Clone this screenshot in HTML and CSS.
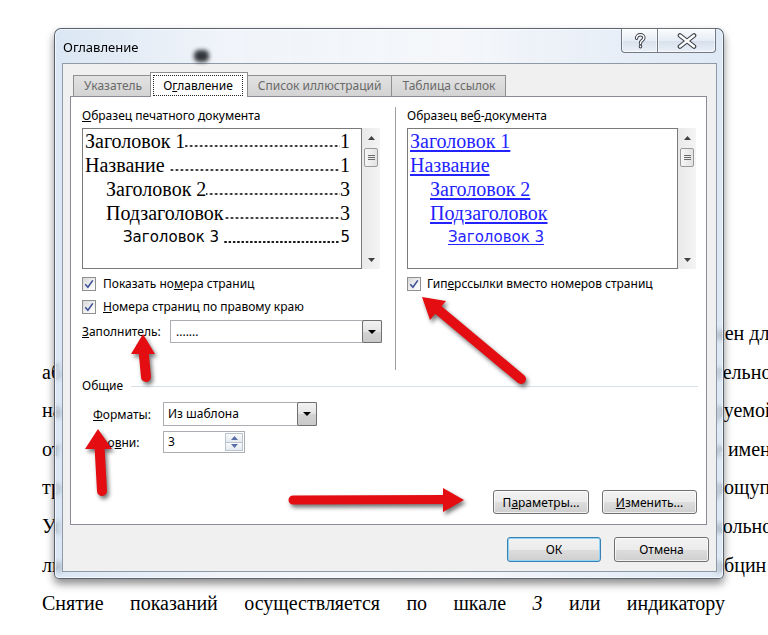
FILE: index.html
```html
<!DOCTYPE html>
<html lang="ru">
<head>
<meta charset="utf-8">
<title>Оглавление</title>
<link rel="stylesheet" href="styles.css">
</head>
<body>
<div class="page">
  <div class="doc">
    <div class="doc-head"></div>
    <div class="row"><span class="l"></span><span class="r">нен для</span></div>
    <div class="row"><span class="l">аб</span><span class="r">тельно</span></div>
    <div class="row"><span class="l">на</span><span class="r">руемой</span></div>
    <div class="row"><span class="l">от</span><span class="r">е имени</span></div>
    <div class="row"><span class="l">тр</span><span class="r">рощупь</span></div>
    <div class="row"><span class="l">Ус</span><span class="r">кольно</span></div>
    <div class="row"><span class="l">ли</span><span class="r">обцин</span></div>
    <div class="full">Снятие показаний осуществляется по шкале <i>3</i> или индикатору</div>
    <div class="last"><span>5. Место установки</span><span>НМ</span></div>
  </div>

  <div class="dialog">
    <div class="titlebar">
      <span class="title">Оглавление</span>
      <span class="smudge"></span>
      <div class="caps">
        <span class="cap help"><svg width="12" height="16" viewBox="0 0 12 16"><path d="M2.6 5.2C2.6 3 4.2 1.8 6.3 1.8C8.6 1.8 9.9 3.1 9.9 4.8C9.9 6.6 8.4 7.2 7.4 8C6.7 8.6 6.5 9.1 6.5 10.4M6.5 13.2L6.5 13.8" fill="none" stroke="#3a3f47" stroke-width="3.4" stroke-linecap="round" stroke-linejoin="round"/><path d="M2.6 5.2C2.6 3 4.2 1.8 6.3 1.8C8.6 1.8 9.9 3.1 9.9 4.8C9.9 6.6 8.4 7.2 7.4 8C6.7 8.6 6.5 9.1 6.5 10.4M6.5 13.2L6.5 13.8" fill="none" stroke="#fff" stroke-width="1.5" stroke-linecap="round" stroke-linejoin="round"/></svg></span>
        <span class="cap close"><svg width="22" height="16" viewBox="0 0 22 16"><path d="M4 2.5L18 13.5M18 2.5L4 13.5" fill="none" stroke="#3a3f47" stroke-width="4.6" stroke-linecap="round"/><path d="M4 2.5L18 13.5M18 2.5L4 13.5" fill="none" stroke="#fff" stroke-width="2.4" stroke-linecap="round"/></svg></span>
      </div>
    </div>

    <div class="client">
      <div class="tabs">
        <span class="tab">Указатель</span>
        <span class="tab active"><span class="focus">О<u>г</u>лавление</span></span>
        <span class="tab">Список иллюстраций</span>
        <span class="tab">Таблица ссылок</span>
      </div>

      <div class="panel">
        <div class="samples">
          <div class="col left">
            <div class="label"><u>О</u>бразец печатного документа</div>
            <div class="preview">
              <div class="pbox">
                <div class="toc h1"><span class="n">Заголовок 1</span><span class="dots"></span><span class="pg">1</span></div>
                <div class="toc h1"><span class="n sp">Название</span><span class="dots"></span><span class="pg">1</span></div>
                <div class="toc h2"><span class="n">Заголовок 2</span><span class="dots"></span><span class="pg">3</span></div>
                <div class="toc h2"><span class="n">Подзаголовок</span><span class="dots"></span><span class="pg">3</span></div>
                <div class="toc h3"><span class="n sp">Заголовок 3</span><span class="dots"></span><span class="pg">5</span></div>
              </div>
              <div class="vscroll">
                <span class="sa"><svg width="7" height="4" viewBox="0 0 7 4"><path d="M3.5 0L7 4H0Z" fill="#404040"/></svg></span>
                <span class="thumb"><svg width="7" height="5" viewBox="0 0 7 5"><path d="M0 0.5H7M0 2.5H7M0 4.5H7" stroke="#6b6b6b" stroke-width="1"/></svg></span>
                <span class="sfill"></span>
                <span class="sa"><svg width="7" height="4" viewBox="0 0 7 4"><path d="M0 0H7L3.5 4Z" fill="#404040"/></svg></span>
              </div>
            </div>
            <div class="check"><span class="cb"><svg width="12" height="12" viewBox="0 0 12 12"><path d="M2.3 6.3L4.9 9.2L9.8 2.4" fill="none" stroke="#3c4f98" stroke-width="1.6"/></svg></span>Показать но<u>м</u>ера страниц</div>
            <div class="check"><span class="cb"><svg width="12" height="12" viewBox="0 0 12 12"><path d="M2.3 6.3L4.9 9.2L9.8 2.4" fill="none" stroke="#3c4f98" stroke-width="1.6"/></svg></span><u>Н</u>омера страниц по правому краю</div>
            <div class="field">
              <span class="flabel"><u>З</u>аполнитель:</span>
              <div class="combo leader"><span class="val">.......</span><span class="drop"><svg width="8" height="4" viewBox="0 0 8 4"><path d="M0 0H8L4 4Z" fill="#000"/></svg></span></div>
            </div>
          </div>

          <div class="vsep"></div>

          <div class="col right">
            <div class="label">Образец ве<u>б</u>-документа</div>
            <div class="preview">
              <div class="pbox web">
                <div class="toc h1"><span class="lnk">Заголовок 1</span></div>
                <div class="toc h1"><span class="lnk">Название</span></div>
                <div class="toc h2"><span class="lnk">Заголовок 2</span></div>
                <div class="toc h2"><span class="lnk">Подзаголовок</span></div>
                <div class="toc h3"><span class="lnk">Заголовок 3</span></div>
              </div>
              <div class="vscroll">
                <span class="sa"><svg width="7" height="4" viewBox="0 0 7 4"><path d="M3.5 0L7 4H0Z" fill="#404040"/></svg></span>
                <span class="thumb"><svg width="7" height="5" viewBox="0 0 7 5"><path d="M0 0.5H7M0 2.5H7M0 4.5H7" stroke="#6b6b6b" stroke-width="1"/></svg></span>
                <span class="sfill"></span>
                <span class="sa"><svg width="7" height="4" viewBox="0 0 7 4"><path d="M0 0H7L3.5 4Z" fill="#404040"/></svg></span>
              </div>
            </div>
            <div class="check"><span class="cb"><svg width="12" height="12" viewBox="0 0 12 12"><path d="M2.3 6.3L4.9 9.2L9.8 2.4" fill="none" stroke="#3c4f98" stroke-width="1.6"/></svg></span>Гип<u>е</u>рссылки вместо номеров страниц</div>
          </div>
        </div>

        <div class="group"><span>Общие</span><span class="hline"></span></div>
        <div class="grow">
          <span class="glabel"><u>Ф</u>орматы:</span>
          <div class="combo formats"><span class="val">Из шаблона</span><span class="drop"><svg width="8" height="4" viewBox="0 0 8 4"><path d="M0 0H8L4 4Z" fill="#000"/></svg></span></div>
        </div>
        <div class="grow lv">
          <span class="glabel">Уро<u>в</u>ни:</span>
          <div class="spin"><span class="val">3</span><span class="spbtns"><span class="sb"><svg width="7" height="4" viewBox="0 0 7 4"><path d="M3.5 0L7 4H0Z" fill="#5a6ea8"/></svg></span><span class="sb"><svg width="7" height="4" viewBox="0 0 7 4"><path d="M0 0H7L3.5 4Z" fill="#5a6ea8"/></svg></span></span></div>
        </div>
        <div class="panel-btns">
          <span class="btn">П<u>а</u>раметры...</span>
          <span class="btn"><u>И</u>зменить...</span>
        </div>
      </div>

      <div class="dlg-btns">
        <span class="btn ok">ОК</span>
        <span class="btn">Отмена</span>
      </div>
    </div>
  </div>

  <svg class="arrows" width="768" height="635" viewBox="0 0 768 635">
    <g fill="#e30d12" stroke="#e30d12" stroke-linecap="round">
      <path d="M146 377L143.5 350" stroke-width="10" fill="none"/>
      <path d="M143 334L155 354L131 354Z" stroke="none"/>
      <path d="M521 379L436 308" stroke-width="10" fill="none"/>
      <path d="M422 297L446 301L430 320Z" stroke="none"/>
      <path d="M102 491L99.5 446" stroke-width="10" fill="none"/>
      <path d="M98 429L112 449L85 449Z" stroke="none"/>
      <path d="M293 500L446 499.5" stroke-width="9" fill="none"/>
      <path d="M464 500L443 488L443 512Z" stroke="none"/>
    </g>
  </svg>
</div>
</body>
</html>
```

FILE: styles.css
```css
* { box-sizing: border-box; }
html, body { margin: 0; padding: 0; background: #fff; }
body { width: 768px; height: 635px; overflow: hidden; }
.page { position: relative; width: 768px; height: 635px; overflow: hidden; background: #fff; color: #000; }

/* document behind the dialog */
.doc { font-family: "Liberation Serif", "Times New Roman", serif; font-size: 20px; line-height: 38.6px; }
.doc-head { height: 314px; }
.row { display: grid; grid-template-columns: 672px max-content; height: 38.6px; padding-left: 42px; white-space: nowrap; }
.full { height: 38.6px; width: 725px; padding-left: 42px; text-align: justify; text-align-last: justify; }
.last { display: flex; justify-content: space-between; width: 713px; padding-left: 332px; height: 38.6px; }

/* dialog window */
.dialog {
  position: absolute; left: 54px; top: 28px; width: 670px; height: 551px;
  display: flex; flex-direction: column;
  padding: 0 6px 6px 7px;
  border: 1px solid rgba(55, 65, 80, 0.8);
  border-radius: 7px 7px 5px 5px;
  background: linear-gradient(to right, rgba(200, 218, 238, 0.66), rgba(232, 238, 246, 0.66) 25%, rgba(240, 243, 248, 0.68) 60%, rgba(205, 221, 240, 0.66));
  -webkit-backdrop-filter: blur(2.5px);
  backdrop-filter: blur(2.5px);
  box-shadow: 0 5px 9px rgba(0, 0, 0, 0.45), inset 0 0 0 1px rgba(255, 255, 255, 0.65);
  font-family: "Noto Sans", "Open Sans", sans-serif;
  font-size: 12px;
  color: #000;
}
.titlebar { height: 34px; display: flex; align-items: flex-start; }
.title { margin-left: 1px; padding-top: 9px; font-size: 13px; line-height: 18px; }
.smudge {
  width: 15px; height: 12px; margin: 21px 0 0 56px;
  background: #1f2226; border-radius: 5px; filter: blur(2px); opacity: 0.9;
}
.caps { margin-left: auto; margin-right: 1px; margin-top: -1px; display: flex; }
.cap {
  height: 25px; display: flex; align-items: center; justify-content: center;
  border: 1px solid rgba(60, 68, 80, 0.7);
  background: linear-gradient(rgba(255, 255, 255, 0.85), rgba(232, 237, 244, 0.8) 50%, rgba(212, 222, 234, 0.8) 52%, rgba(236, 241, 247, 0.85));
  box-shadow: inset 0 0 0 1px rgba(255, 255, 255, 0.6);
}
.cap.help { width: 37px; border-radius: 0 0 0 4px; }
.cap.close { width: 58px; border-left: 0; border-radius: 0 0 4px 0; }

.client {
  flex: 1; display: flex; flex-direction: column;
  background: #f0f0f0; border: 1px solid #8f9aa8;
  padding: 8px 9px 0 7px;
}

/* tabs */
.tabs { height: 24px; display: flex; align-items: flex-end; padding-left: 3px; position: relative; z-index: 1; }
.tab {
  height: 21px; padding: 0 10px; line-height: 19px; white-space: nowrap;
  border: 1px solid #8e8f8f; border-bottom: 0; margin-right: -1px;
  background: linear-gradient(#e2e2e2, #d3d3d3); color: #6a6a6a;
}
.tab.active {
  height: 25px; margin: 0 -1px -1px -2px; padding: 2px 4px 0 2px;
  background: #fff; color: #000; position: relative;
}
.focus { display: inline-block; height: 21px; padding: 0 9px; line-height: 19px; border: 1px dotted #222; }

.panel {
  height: 429px; background: #fff; border: 1px solid #898c95;
  padding: 10px 8px 10px 11px; display: flex; flex-direction: column;
}
.samples { display: flex; height: 263px; }
.col { padding-top: 2px; }
.col.left { width: 300px; }
.col.right { width: 291px; }
.vsep { width: 1px; background: #a0a0a0; margin: 0 11px 0 13px; }
.label { height: 14px; line-height: 14px; white-space: nowrap; }

.preview { display: flex; margin-top: 5px; height: 141px; }
.pbox { width: 280px; height: 141px; border: 1px solid #7a7a7a; background: #fff; padding: 0 11px 0 2px; overflow: hidden; }
.pbox.web { width: 271px; padding-right: 4px; }
.toc { display: flex; height: 24px; line-height: 24px; white-space: nowrap; font-family: "Liberation Serif", "Times New Roman", serif; font-size: 20px; }
.toc.h2 { padding-left: 21px; }
.toc.h3 { padding-left: 38px; font-family: "DejaVu Sans", "Verdana", sans-serif; font-size: 15px; }
.pbox.web .toc.h2 { padding-left: 20px; }
.pbox.web .toc.h3 { padding-left: 38px; }
.n.sp { margin-right: 5px; }
.dots {
  flex: 1; min-width: 0;
  background-image: radial-gradient(circle, #111 0.95px, rgba(0, 0, 0, 0) 1.35px);
  background-size: 5px 4px; background-repeat: repeat-x; background-position: right 1px bottom 5px;
}
.toc.h3 .dots { background-size: 4.3px 4px; background-position: right 1px bottom 5px; }
.lnk { color: #2323ff; text-decoration: underline; text-underline-offset: 2px; }

.vscroll { width: 18px; height: 141px; display: flex; flex-direction: column; background: linear-gradient(to right, #e9e9e9, #f4f4f4); }
.sa { height: 19px; display: flex; align-items: center; justify-content: center; }
.thumb {
  height: 19px; margin: 1px 2px 0; display: flex; align-items: center; justify-content: center;
  border: 1px solid #9a9a9a; border-radius: 2px;
  background: linear-gradient(to right, #f6f6f6, #e2e2e2);
}
.sfill { flex: 1; }

.check { display: flex; align-items: center; height: 23px; white-space: nowrap; }
.col.left .preview + .check { margin-top: 3px; }
.col.right .check { margin-top: 3px; }
.cb {
  width: 14px; height: 14px; margin-right: 7px; flex: none;
  border: 1px solid #8e8f8f; display: flex; align-items: center; justify-content: center;
  background: linear-gradient(135deg, #d8d8d8, #f6f6f6 70%, #fff);
}
.col.right .cb { margin-right: 6px; }

.field { display: flex; align-items: center; height: 23px; margin-top: 2px; }
.flabel { width: 88px; }
.combo { display: flex; height: 23px; border: 1px solid #abadb3; background: #fff; }
.combo .val { flex: 1; padding-left: 4px; line-height: 21px; }
.combo.leader { width: 212px; }
.combo.leader .val { padding-left: 5px; }
.drop {
  width: 20px; margin: -1px -1px -1px 0; display: flex; align-items: center; justify-content: center;
  border: 1px solid #707070; border-radius: 2px;
  background: linear-gradient(#f2f2f2, #e4e4e4 50%, #d3d3d3 51%, #c9c9c9);
}

.group { display: flex; align-items: center; height: 14px; line-height: 14px; margin-top: 9px; }
.hline { flex: 1; height: 1px; background: #d5dfe5; margin: 0 0 0 8px; }
.grow { display: flex; align-items: center; padding-left: 11px; margin-top: 9px; }
.grow.lv { margin-top: 5px; }
.glabel { width: 70px; }
.combo.formats { width: 154px; height: 24px; }
.combo.formats .val { line-height: 22px; }
.spin { display: flex; width: 82px; height: 22px; border: 1px solid #abadb3; background: #fff; }
.spin .val { flex: 1; padding-left: 4px; line-height: 20px; }
.spbtns { width: 19px; display: flex; flex-direction: column; padding: 1px 1px 1px 0; }
.sb {
  flex: 1; display: flex; align-items: center; justify-content: center;
  border: 1px solid #b8c4d2; background: linear-gradient(#fafafa, #e6e9ee);
}
.sb + .sb { border-top: 0; }

.btn {
  display: flex; align-items: center; justify-content: center; white-space: nowrap;
  height: 24px; border: 1px solid #707070; border-radius: 3px;
  background: linear-gradient(#f2f2f2, #ebebeb 50%, #dddddd 51%, #cfcfcf);
  box-shadow: inset 0 0 0 1px rgba(255, 255, 255, 0.7);
}
.panel-btns { display: flex; justify-content: flex-end; gap: 13px; margin-top: 37px; padding-right: 1px; }
.panel-btns .btn:first-child { width: 96px; }
.panel-btns .btn:last-child { width: 95px; }
.dlg-btns { display: flex; justify-content: flex-end; gap: 13px; margin-top: 12px; margin-right: -2px; }
.dlg-btns .btn { width: 95px; height: 25px; }
.btn.ok { width: 94px; border-color: #3c7fb1; box-shadow: inset 0 0 0 1px #8fd3f5; }

/* annotation arrows */
.arrows { position: absolute; left: 0; top: 0; pointer-events: none; filter: drop-shadow(2px 3px 2px rgba(0, 0, 0, 0.55)); }
```
